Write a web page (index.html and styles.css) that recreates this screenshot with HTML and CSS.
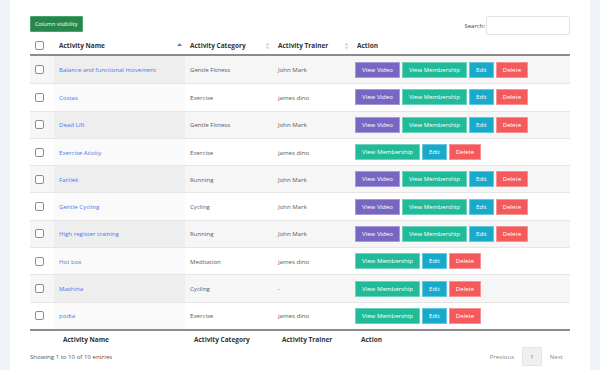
FILE: index.html
```html
<!DOCTYPE html>
<html lang="en">
<head>
  <meta charset="UTF-8" />
  <title>Activities</title>
  <link rel="stylesheet" href="styles.css">
</head>
<body>
  <div class="panel">
    <div class="toolbar">
      <button class="btn-colvis">Column visibility</button>
      <label class="search">Search: <input type="text"></label>
    </div>

    <table class="grid">
      <colgroup>
        <col class="col-check">
        <col class="col-name">
        <col class="col-cat">
        <col class="col-trainer">
        <col class="col-action">
      </colgroup>
      <thead>
        <tr>
          <th><span class="check"></span></th>
          <th>Activity Name
            <svg class="sort" width="5" height="8" viewBox="0 0 5 8"><path d="M2.5 1 L5 4 L0 4 Z" fill="#7b70d8"/></svg>
          </th>
          <th>Activity Category
            <svg class="sort" width="5" height="8" viewBox="0 0 5 8"><path d="M2.5 0.5 L4.5 3.3 L0.5 3.3 Z M2.5 7.5 L4.5 4.7 L0.5 4.7 Z" fill="#d6d6d6"/></svg>
          </th>
          <th>Activity Trainer
            <svg class="sort" width="5" height="8" viewBox="0 0 5 8"><path d="M2.5 0.5 L4.5 3.3 L0.5 3.3 Z M2.5 7.5 L4.5 4.7 L0.5 4.7 Z" fill="#d6d6d6"/></svg>
          </th>
          <th>Action</th>
        </tr>
      </thead>
      <tbody>
        <tr>
          <td><span class="check"></span></td>
          <td class="name"><a href="#">Balance and functional movement</a></td>
          <td>Gentle Fitness</td>
          <td>John Mark</td>
          <td class="actions"><a class="btn video">View Video</a><a class="btn member">View Membership</a><a class="btn edit">Edit</a><a class="btn del">Delete</a></td>
        </tr>
        <tr>
          <td><span class="check"></span></td>
          <td class="name"><a href="#">Costas</a></td>
          <td>Exercise</td>
          <td>james dino</td>
          <td class="actions"><a class="btn video">View Video</a><a class="btn member">View Membership</a><a class="btn edit">Edit</a><a class="btn del">Delete</a></td>
        </tr>
        <tr>
          <td><span class="check"></span></td>
          <td class="name"><a href="#">Dead Lift</a></td>
          <td>Gentle Fitness</td>
          <td>John Mark</td>
          <td class="actions"><a class="btn video">View Video</a><a class="btn member">View Membership</a><a class="btn edit">Edit</a><a class="btn del">Delete</a></td>
        </tr>
        <tr>
          <td><span class="check"></span></td>
          <td class="name"><a href="#">Exercise Ativity</a></td>
          <td>Exercise</td>
          <td>james dino</td>
          <td class="actions"><a class="btn member">View Membership</a><a class="btn edit">Edit</a><a class="btn del">Delete</a></td>
        </tr>
        <tr>
          <td><span class="check"></span></td>
          <td class="name"><a href="#">Fartlek</a></td>
          <td>Running</td>
          <td>John Mark</td>
          <td class="actions"><a class="btn video">View Video</a><a class="btn member">View Membership</a><a class="btn edit">Edit</a><a class="btn del">Delete</a></td>
        </tr>
        <tr>
          <td><span class="check"></span></td>
          <td class="name"><a href="#">Gentle Cycling</a></td>
          <td>Cycling</td>
          <td>John Mark</td>
          <td class="actions"><a class="btn video">View Video</a><a class="btn member">View Membership</a><a class="btn edit">Edit</a><a class="btn del">Delete</a></td>
        </tr>
        <tr>
          <td><span class="check"></span></td>
          <td class="name"><a href="#">High register training</a></td>
          <td>Running</td>
          <td>John Mark</td>
          <td class="actions"><a class="btn video">View Video</a><a class="btn member">View Membership</a><a class="btn edit">Edit</a><a class="btn del">Delete</a></td>
        </tr>
        <tr>
          <td><span class="check"></span></td>
          <td class="name"><a href="#">Hot box</a></td>
          <td>Meditation</td>
          <td>james dino</td>
          <td class="actions"><a class="btn member">View Membership</a><a class="btn edit">Edit</a><a class="btn del">Delete</a></td>
        </tr>
        <tr>
          <td><span class="check"></span></td>
          <td class="name"><a href="#">Mashina</a></td>
          <td>Cycling</td>
          <td>-</td>
          <td class="actions"><a class="btn member">View Membership</a><a class="btn edit">Edit</a><a class="btn del">Delete</a></td>
        </tr>
        <tr>
          <td><span class="check"></span></td>
          <td class="name"><a href="#">podia</a></td>
          <td>Exercise</td>
          <td>james dino</td>
          <td class="actions"><a class="btn member">View Membership</a><a class="btn edit">Edit</a><a class="btn del">Delete</a></td>
        </tr>
      </tbody>
      <tfoot>
        <tr>
          <th></th>
          <th>Activity Name</th>
          <th>Activity Category</th>
          <th>Activity Trainer</th>
          <th>Action</th>
        </tr>
      </tfoot>
    </table>

    <div class="footer">
      <div class="info">Showing 1 to 10 of 10 entries</div>
      <div class="pager">
        <span class="page-link">Previous</span>
        <span class="page-link current">1</span>
        <span class="page-link">Next</span>
      </div>
    </div>
  </div>
</body>
</html>
```

FILE: styles.css
```css
* { box-sizing: border-box; }
html, body {
  margin: 0;
  height: 100%;
  background: #f1f4f9;
  font-family: "Open Sans", "Liberation Sans", sans-serif;
  font-size: 6.1px;
  color: #5b5b5b;
}
.panel {
  margin: 0 10px;
  min-height: 100%;
  background: #fff;
  padding: 16px 20px 0;
}
.toolbar {
  display: flex;
  justify-content: space-between;
  align-items: flex-start;
  height: 20px;
}
.btn-colvis {
  font: inherit;
  font-size: 5.6px;
  color: #fff;
  background: #27874b;
  border: 1px solid #4aa36c;
  border-radius: 1px;
  height: 16px;
  padding: 0 4px;
}
.search {
  display: flex;
  align-items: center;
  gap: 1px;
  color: #444;
  font-size: 6px;
}
.search input {
  width: 84px;
  height: 19px;
  border: 1px solid #e2e2e2;
  border-radius: 2px;
}
.grid {
  width: 100%;
  table-layout: fixed;
  border-collapse: separate;
  border-spacing: 0;
}
.col-check { width: 24px; }
.col-name { width: 131px; }
.col-cat { width: 88px; }
.col-trainer { width: 79px; }
.grid th {
  text-align: left;
  font-size: 6.5px;
  font-weight: 700;
  color: #333;
  padding: 0 5px;
  height: 20px;
  position: relative;
}
.grid thead th { border-bottom: 2px solid #8c8c8c; }
.sort {
  position: absolute;
  right: 3px;
  top: 6px;
}
.grid td {
  height: 27.3px;
  padding: 0 5px;
  border-top: 1px solid #e6e6e6;
  white-space: nowrap;
  color: #5b5b5b;
}
.grid tbody tr:first-child td { border-top: none; }
.grid tbody tr:nth-child(odd) td { background: #f6f6f6; }
.grid tbody tr:nth-child(odd) td.name { background: #eeeeee; }
.grid tbody tr:nth-child(even) td.name { background: #fafafa; }
.grid td.name a { color: #4a78f2; text-decoration: none; }
.check {
  display: block;
  width: 9px;
  height: 9px;
  border: 1px solid #8d8d8d;
  border-radius: 2px;
  background: #fff;
}
.grid td.actions { padding: 0 3px; }
.btn {
  display: inline-block;
  height: 16px;
  line-height: 14px;
  padding: 0 6px;
  margin-right: 2px;
  color: #fff;
  border: 1px solid rgba(255, 255, 255, 0.35);
  vertical-align: middle;
}
.btn.video { background: #7866c2; }
.btn.member { background: #22bb99; }
.btn.edit { background: #18aacb; }
.btn.del { background: #f45a5b; }
.grid tfoot th {
  border-top: 2px solid #8c8c8c;
  padding-left: 9px;
  height: 19px;
}
.footer {
  display: flex;
  justify-content: space-between;
  align-items: center;
  margin-top: -1px;
}
.info { color: #555; }
.pager { display: flex; align-items: center; }
.page-link {
  padding: 0 8px;
  color: #888;
  line-height: 17px;
}
.page-link:last-child { padding-right: 7px; }
.page-link.current {
  background: #f0f0f0;
  border: 1px solid #e4e4e4;
  color: #777;
  padding: 0 7px;
}
```
